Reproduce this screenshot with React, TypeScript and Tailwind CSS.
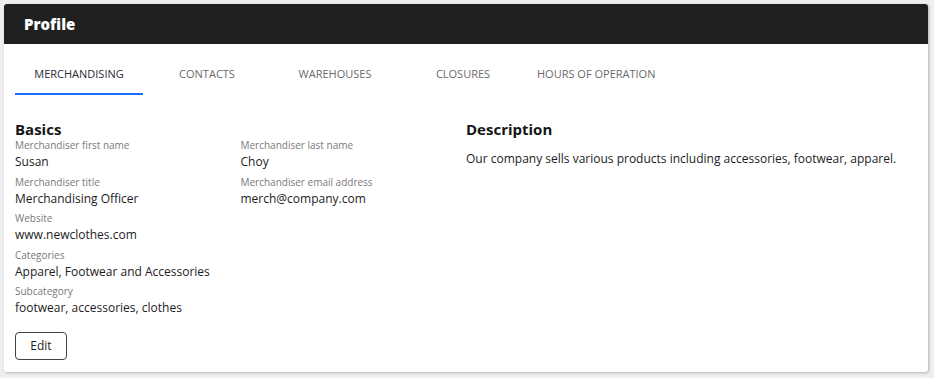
import React from 'react'

const tabs = ['MERCHANDISING', 'CONTACTS', 'WAREHOUSES', 'CLOSURES', 'HOURS OF OPERATION']

const fields: [string, string][] = [
  ['Merchandiser first name', 'Susan'],
  ['Merchandiser last name', 'Choy'],
  ['Merchandiser title', 'Merchandising Officer'],
  ['Merchandiser email address', 'merch@company.com'],
  ['Website', 'www.newclothes.com'],
  ['', ''],
  ['Categories', 'Apparel, Footwear and Accessories'],
  ['', ''],
  ['Subcategory', 'footwear, accessories, clothes'],
]

function Field({ label, value }: { label: string; value: string }) {
  if (!label) return <div />
  return (
    <div className="flex flex-col">
      <span className="text-[10px] leading-[13px] text-[#7a7a7a]">{label}</span>
      <span className="mt-px text-[12px] leading-[17px] text-[#1c1c1c]">{value}</span>
    </div>
  )
}

export default function App() {
  return (
    <div
      className="min-h-[378px] bg-[#efefef] p-1"
      style={{ fontFamily: '"Open Sans", "Liberation Sans", sans-serif' }}
    >
      <div className="w-[924px] overflow-hidden rounded-[3px] bg-white shadow-[1px_1px_3px_rgba(0,0,0,0.25)]">
        <div className="flex h-10 items-center bg-[#202020] px-5">
          <h1 className="text-[15px] font-extrabold text-white">Profile</h1>
        </div>

        <div className="flex px-[11px] pt-[11px]">
          {tabs.map((t, i) => (
            <div
              key={t}
              className={
                'flex h-[40px] items-center justify-center text-[11px] ' +
                (i === 4 ? 'px-[10px]' : 'w-[128px]') +
                (i === 0
                  ? ' border-b-2 border-[#1a6dff] text-[#2a2a3a]'
                  : ' border-b-2 border-transparent text-[#6b6b6b]')
              }
            >
              {t}
            </div>
          ))}
        </div>

        <div className="grid grid-cols-2 px-[11px] pt-[24px] pb-[12px]">
          <div>
            <h2 className="text-[15px] font-bold leading-[20px] text-[#161616]">Basics</h2>
            <div className="grid grid-cols-2 gap-y-[5.5px]">
              {fields.map(([l, v], i) => (
                <Field key={i} label={l} value={v} />
              ))}
            </div>
            <button className="mt-[15.5px] h-[28px] w-[52px] rounded-[4px] border border-[#444] text-[12px] text-[#1c1c1c]">
              Edit
            </button>
          </div>
          <div>
            <h2 className="text-[15px] font-bold leading-[20px] text-[#161616]">Description</h2>
            <p className="mt-[10.5px] text-[12px] leading-[17px] text-[#1c1c1c]">
              Our company sells various products including accessories, footwear, apparel.
            </p>
          </div>
        </div>
      </div>
    </div>
  )
}
